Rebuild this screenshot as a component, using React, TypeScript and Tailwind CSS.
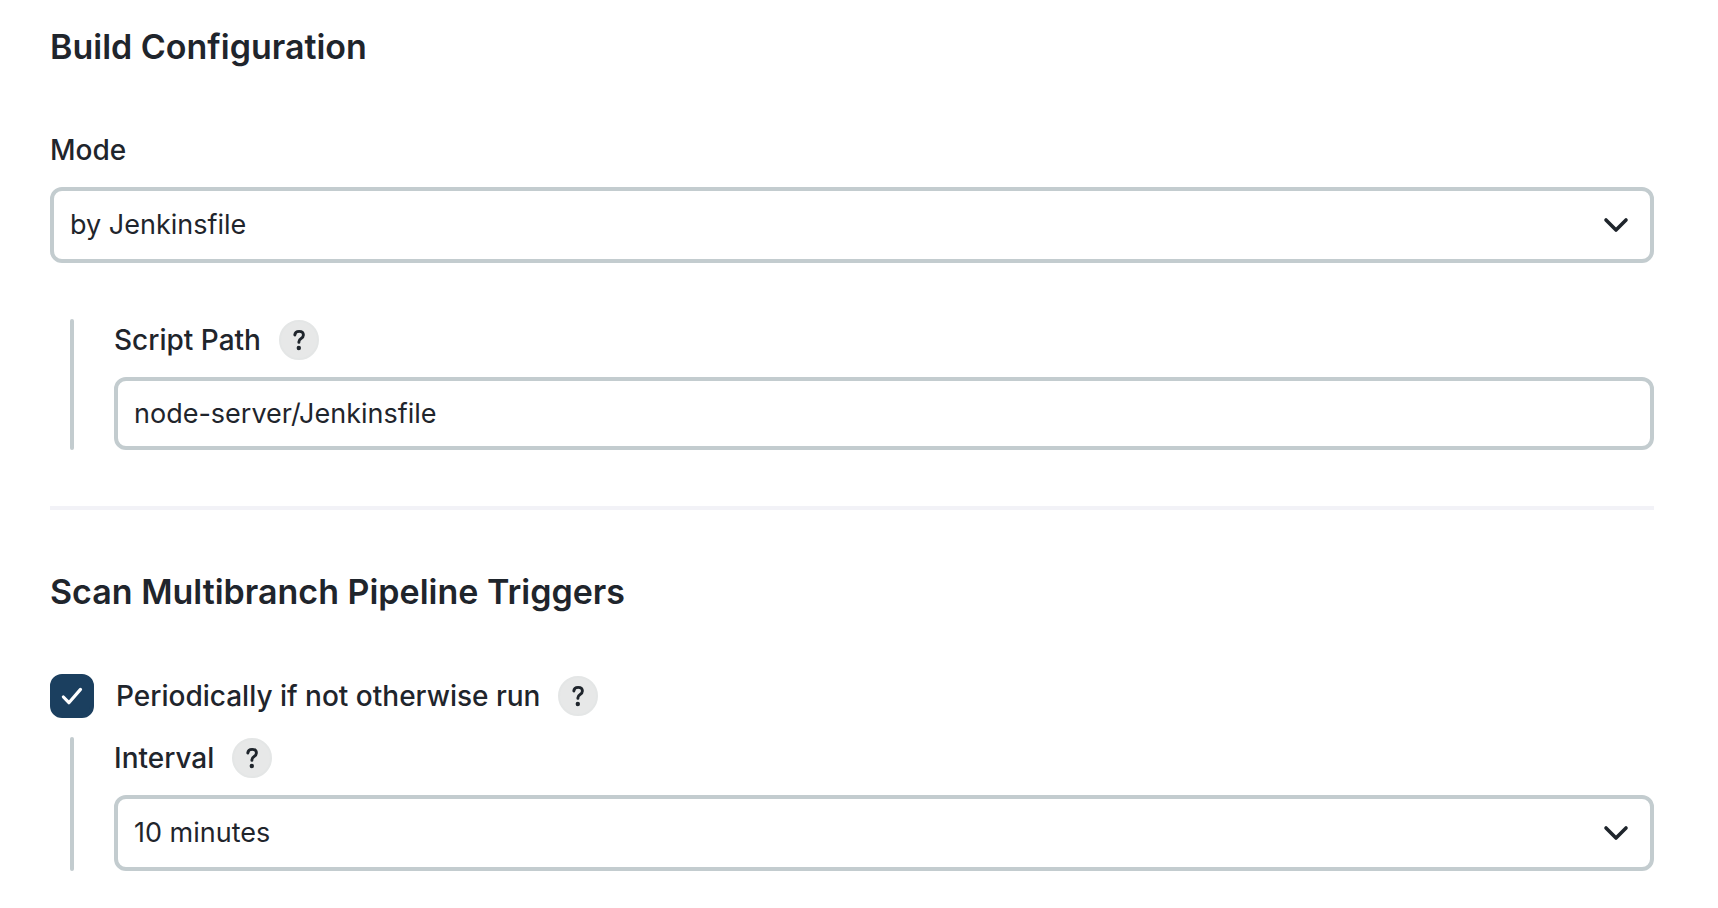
import type { ReactNode } from 'react';

const fieldClass =
  'block w-full appearance-none rounded-xl border-4 border-[#c3cccf] bg-white px-4 text-[27px] leading-9 text-[#1f252c] outline-none focus:border-[#8fa0a8]';

function Help({ topic }: { topic: string }) {
  return (
    <button
      type="button"
      aria-label={`Help for feature: ${topic}`}
      className="flex size-10 shrink-0 items-center justify-center rounded-full border-2 border-[#e4e6e6] bg-[#e7e8e8] text-[#1f252c]"
    >
      <svg viewBox="0 0 40 40" className="size-10 shrink-0" fill="none" aria-hidden="true">
        <path
          d="M15.800 15c.2-2.200 1.800-3.600 4.300-3.600 2.600 0 4.300 1.500 4.300 3.700 0 1.600-.8 2.600-2.300 3.500-1.600 1-2.200 1.700-2.200 3.200v.6"
          stroke="currentColor"
          strokeWidth="2.900"
          strokeLinecap="round"
          strokeLinejoin="round"
        />
        <circle cx="19.800" cy="28" r="2.200" fill="currentColor" />
      </svg>
    </button>
  );
}

function FieldLabel({ id, children, help }: { id: string; children: string; help?: boolean }) {
  return (
    <div className="mb-4 flex h-[42px] items-center gap-[18px]">
      <label htmlFor={id} className="font-medium">
        {children}
      </label>
      {help && <Help topic={children} />}
    </div>
  );
}

function Select({ id, options }: { id: string; options: string[] }) {
  return (
    <div className="relative">
      <select id={id} className={`${fieldClass} h-[76px] pr-16`}>
        {options.map((option) => (
          <option key={option}>{option}</option>
        ))}
      </select>
      <svg
        viewBox="0 0 28 28"
        className="pointer-events-none absolute inset-y-0 right-6 my-auto size-7"
        fill="none"
        aria-hidden="true"
      >
        <path
          d="M4 9l10 10L24 9"
          stroke="#1f252c"
          strokeWidth="3.600"
          strokeLinecap="round"
          strokeLinejoin="round"
        />
      </svg>
    </div>
  );
}

function Nested({ children }: { children: ReactNode }) {
  return (
    <div className="flex gap-10 pl-5">
      <div className="w-1 shrink-0 rounded-full bg-[#c3cccf]" />
      <div className="min-w-0 grow">{children}</div>
    </div>
  );
}

function Heading({ children }: { children: string }) {
  return <h2 className="mb-[60px] text-[34px] leading-[44px] font-semibold">{children}</h2>;
}

export default function App() {
  return (
    <main className="min-h-screen bg-white pt-[25px] pr-16 pb-9 pl-[50px] font-['Inter',sans-serif] text-[28px] leading-10 text-[#1f252c]">
      <section>
        <Heading>Build Configuration</Heading>
        <FieldLabel id="mode">Mode</FieldLabel>
        <Select id="mode" options={['by Jenkinsfile']} />
        <div className="mt-14">
          <Nested>
            <FieldLabel id="script-path" help>
              Script Path
            </FieldLabel>
            <input
              id="script-path"
              type="text"
              defaultValue="node-server/Jenkinsfile"
              className={`${fieldClass} h-[73px]`}
            />
          </Nested>
        </div>
      </section>
      <hr className="mt-14 mb-[60px] border-t-4 border-[#f2f2f7]" />
      <section>
        <Heading>Scan Multibranch Pipeline Triggers</Heading>
        <div className="mb-[19px] flex h-11 items-center gap-[18px]">
          <label className="flex items-center gap-[22px] font-medium">
            <span className="grid size-11 shrink-0">
              <input
                type="checkbox"
                defaultChecked
                className="peer col-start-1 row-start-1 size-11 appearance-none rounded-xl border-4 border-[#c3cccf] checked:border-[#1b3f5f] checked:bg-[#1b3f5f]"
              />
              <svg
                viewBox="0 0 44 44"
                className="pointer-events-none invisible col-start-1 row-start-1 size-11 peer-checked:visible"
                fill="none"
                aria-hidden="true"
              >
                <path
                  d="M13.400 23l5.500 5.700L30.500 15.400"
                  stroke="white"
                  strokeWidth="3.200"
                  strokeLinecap="round"
                  strokeLinejoin="round"
                />
              </svg>
            </span>
            Periodically if not otherwise run
          </label>
          <Help topic="Periodically if not otherwise run" />
        </div>
        <Nested>
          <FieldLabel id="interval" help>
            Interval
          </FieldLabel>
          <Select id="interval" options={['10 minutes']} />
        </Nested>
      </section>
    </main>
  );
}
